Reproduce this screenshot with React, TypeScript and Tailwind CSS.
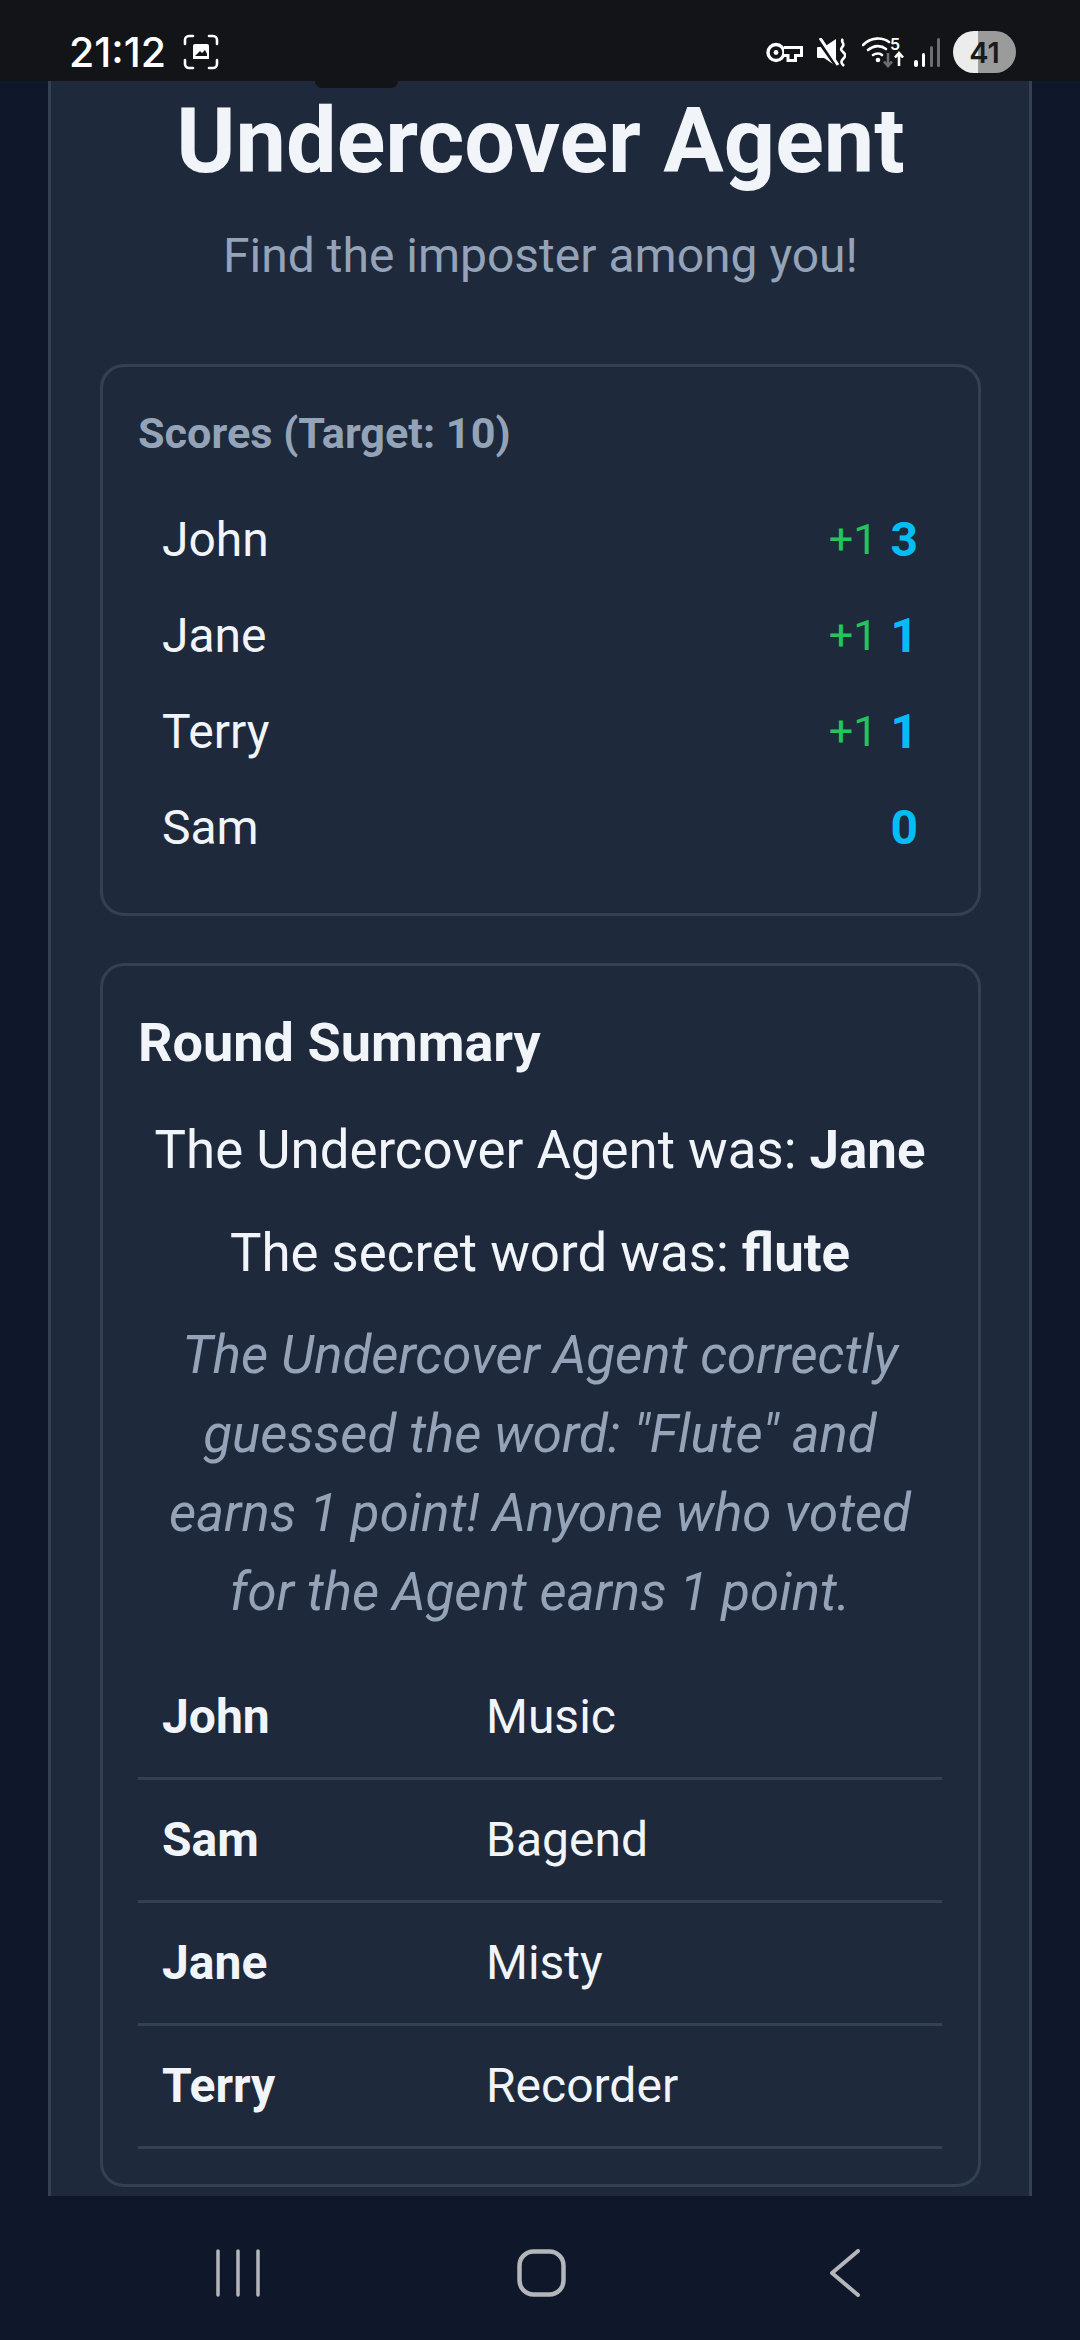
import React from "react";

const scores = [
  { name: "John", bonus: true, score: 3 },
  { name: "Jane", bonus: true, score: 1 },
  { name: "Terry", bonus: true, score: 1 },
  { name: "Sam", bonus: false, score: 0 },
];
const clues = [
  ["John", "Music"],
  ["Sam", "Bagend"],
  ["Jane", "Misty"],
  ["Terry", "Recorder"],
];

function StatusBar() {
  return (
    <div className="relative h-[81px] shrink-0 bg-[#131417] flex items-start justify-between pl-[69px] pr-[64px] pt-[31px] z-10">
      <div className="flex items-center h-[42px]">
        <span className="text-[41px] leading-[42px] font-medium text-white font-['Inter',sans-serif]">21:12</span>
        <svg width="36" height="36" viewBox="0 0 36 36" fill="none" className="ml-[17px]">
          <path d="M2 10V6a4 4 0 0 1 4-4h4M26 2h4a4 4 0 0 1 4 4v4M34 26v4a4 4 0 0 1-4 4h-4M10 34H6a4 4 0 0 1-4-4v-4" stroke="#fff" strokeWidth="2.6" strokeLinecap="round" />
          <path d="M10 12a2 2 0 0 1 2-2h12a2 2 0 0 1 2 2v13H10z" fill="#fff" />
          <path d="M12 22l5-5 2 2 3-3 2 4v2H12z" fill="#131417" />
        </svg>
      </div>
      <div className="flex items-center h-[42px]">
        <svg width="37" height="21" viewBox="0 0 37 21" fill="none">
          <circle cx="10" cy="10.500" r="8" stroke="#fff" strokeWidth="3.400" />
          <circle cx="10" cy="10.500" r="2.400" fill="#fff" />
          <path d="M18 5.500h17.500v8h-6v5h-7.500v-5h-4" fill="#131417" stroke="#fff" strokeWidth="3" />
        </svg>
        <svg width="29" height="29" viewBox="0 0 29 29" fill="none" className="ml-[14px]">
          <path d="M0 10a1 1 0 0 1 1-1h6l12-8v27l-12-8H1a1 1 0 0 1-1-1z" fill="#fff" />
          <path d="M0 0l20 28" stroke="#131417" strokeWidth="4.500" />
          <path d="M3 0l18 27" stroke="#fff" strokeWidth="3" />
          <path d="M26 1c-3 3 2 4 0 7s-3 3 0 6 3 4 0 7-1 5 1 7" stroke="#fff" strokeWidth="2.600" />
        </svg>
        <svg width="43" height="38" viewBox="0 -3 43 38" fill="none" className="ml-[16px]">
          <path d="M1 9c8-8 19-8 26-3" stroke="#fff" strokeWidth="2.600" strokeLinecap="round" />
          <path d="M6 14c6-5 13-5 18-1" stroke="#fff" strokeWidth="2.600" strokeLinecap="round" />
          <path d="M11 19c3-2 7-2 9 0" stroke="#fff" strokeWidth="2.600" strokeLinecap="round" />
          <circle cx="16" cy="24" r="2.300" fill="#fff" />
          <path d="M26 17v13M22 25.500l4 4.500 4-4.500" stroke="#6d6e70" strokeWidth="2.600" />
          <path d="M37 30V17M33 21.500l4-4.500 4 4.500" stroke="#fff" strokeWidth="2.600" />
          <text x="28" y="14" fill="#fff" fontSize="16" fontWeight="600" fontFamily="Inter, sans-serif">5</text>
        </svg>
        <svg width="27" height="29" viewBox="0 0 27 29" fill="none" className="ml-[9px]">
          <rect x="0" y="22" width="4" height="7" rx="2" fill="#fff" />
          <rect x="8" y="15" width="3" height="14" rx="1.500" fill="#fff" />
          <rect x="16" y="8" width="3" height="21" rx="1.500" fill="#6d6e70" />
          <rect x="23" y="0" width="3" height="29" rx="1.500" fill="#6d6e70" />
        </svg>
        <div className="relative w-[63px] h-[42px] ml-[12px] rounded-full overflow-hidden flex items-center justify-center bg-[linear-gradient(90deg,#ececec_0,#ececec_40%,#9b9b9b_40%,#9b9b9b_100%)]">
          <span className="text-[29px] leading-none font-semibold text-[#1a1b1f] font-['Inter',sans-serif]">41</span>
        </div>
      </div>
      <div className="absolute left-[315px] top-[81px] w-[83px] h-[7px] bg-[#131417] rounded-b-[8px]" />
    </div>
  );
}

function NavBar() {
  return (
    <div className="h-[144px] shrink-0 bg-[#0f172a] flex items-start pt-[53px] pl-[216px]">
      <svg width="44" height="48" viewBox="0 0 44 48" fill="none">
        <path d="M2 2v44M22 2v44M42 2v44" stroke="#b4b6ba" strokeWidth="3.500" strokeLinecap="round" />
      </svg>
      <svg width="49" height="48" viewBox="0 0 49 48" fill="none" className="ml-[257px]">
        <rect x="2.500" y="2.500" width="44" height="43" rx="14" stroke="#b4b6ba" strokeWidth="4.500" />
      </svg>
      <svg width="32" height="48" viewBox="0 0 32 48" fill="none" className="ml-[264px]">
        <path d="M28 2L2 24l26 22" stroke="#b4b6ba" strokeWidth="4" strokeLinecap="round" strokeLinejoin="round" />
      </svg>
    </div>
  );
}

export default function App() {
  return (
    <div className="w-[1080px] h-[2340px] flex flex-col overflow-hidden bg-[#0f172a] font-['Roboto',sans-serif]">
      <StatusBar />
      <div className="flex-1 min-h-0 overflow-hidden pl-[48px] pr-[48px]">
        <div className="h-full w-full bg-[#1e293b] border-x-[3px] border-[#334155] pl-[49px] pr-[48px] overflow-hidden">
          <h1 className="mt-[11px] text-center text-[90px] leading-[100px] font-bold text-[#f1f5f9]">Undercover Agent</h1>
          <p className="mt-[29px] text-center text-[48px] leading-[70px] text-[#94a3b8]">Find the imposter among you!</p>
          <section className="mt-[73px] h-[552px] border-[3px] border-[#334155] rounded-[24px] pl-[35px] pr-[36px] pt-[37px]">
            <h2 className="text-[43.200px] leading-[60px] font-bold text-[#94a3b8]">Scores (Target: 10)</h2>
            <div className="mt-[28px]">
              {scores.map((s) => (
                <div key={s.name} className="h-[96px] flex items-center justify-between pl-[24px] pr-[24px]">
                  <span className="text-[48px] text-[#f1f5f9]">{s.name}</span>
                  <span className="flex items-center gap-[13px]">
                    {s.bonus && <span className="text-[43.200px] text-[#22c55e]">+1</span>}
                    <span className="text-[48px] font-bold text-[#05bdf5]">{s.score}</span>
                  </span>
                </div>
              ))}
            </div>
          </section>
          <section className="mt-[47px] h-[1224px] border-[3px] border-[#334155] rounded-[24px] pl-[35px] pr-[36px] pt-[35px]">
            <h2 className="text-[54px] leading-[84px] font-bold text-[#f1f5f9]">Round Summary</h2>
            <p className="mt-[24.500px] text-center text-[52.800px] leading-[80px] text-[#f1f5f9]">The Undercover Agent was: <b>Jane</b></p>
            <p className="mt-[23px] text-center text-[52.800px] leading-[80px] text-[#f1f5f9]">The secret word was: <b>flute</b></p>
            <p className="mt-[23px] px-[20px] text-center text-[52.800px] leading-[79.200px] italic text-[#94a3b8]">The Undercover Agent correctly guessed the word: "Flute" and earns 1 point! Anyone who voted for the Agent earns 1 point.</p>
            <div className="mt-[24.500px]">
              {clues.map(([n, c]) => (
                <div key={n} className="h-[123px] border-b-[3px] border-[#334155] flex items-center pl-[24px]">
                  <span className="w-[324px] text-[48px] font-bold text-[#f1f5f9]">{n}</span>
                  <span className="text-[48px] text-[#f1f5f9]">{c}</span>
                </div>
              ))}
            </div>
          </section>
        </div>
      </div>
      <NavBar />
    </div>
  );
}
